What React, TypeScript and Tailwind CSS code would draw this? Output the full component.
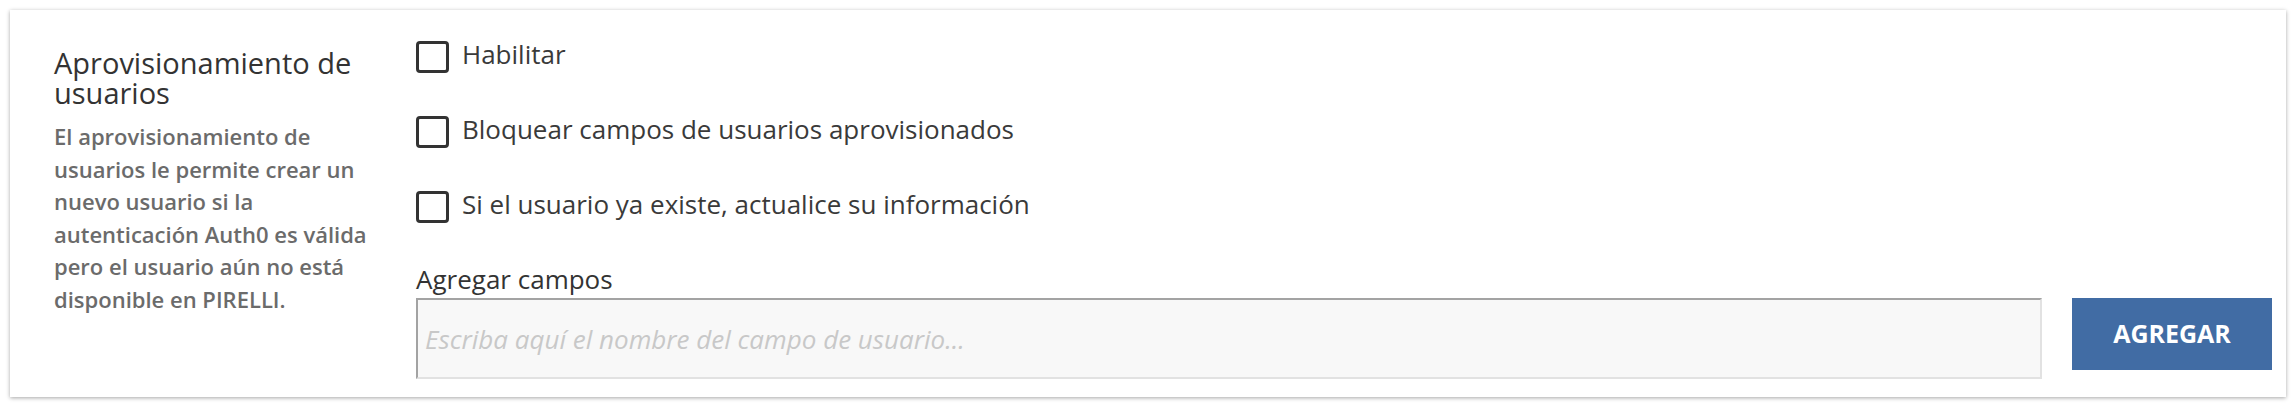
import React from "react";

function Checkbox() {
  return (
    <span className="block w-[33px] h-[32px] shrink-0 rounded-[4px] border-[3px] border-[#333333] bg-white" />
  );
}

function CheckRow({ label }: { label: string }) {
  return (
    <label className="flex items-start gap-[13px]">
      <Checkbox />
      <span className="text-[26px] leading-[26px] text-[#3a3a3a]">{label}</span>
    </label>
  );
}

export default function App() {
  return (
    <div className="w-[2296px] h-[408px] bg-white p-[10px] font-['Open_Sans',sans-serif]">
      <div className="h-[387px] bg-white shadow-[0_1px_4px_rgba(0,0,0,0.35)] flex pl-[44px] pr-[14px]">
        <div className="w-[336px] shrink-0 pt-[38px]">
          <h2 className="text-[29px] leading-[30px] font-normal text-[#333333]">
            Aprovisionamiento de usuarios
          </h2>
          <p className="mt-[12px] text-[22px] leading-[32.5px] font-semibold text-[#6b6b6b]">
            El aprovisionamiento de usuarios le permite crear un nuevo usuario si la autenticación Auth0 es válida pero el usuario aún no está disponible en PIRELLI.
          </p>
        </div>
        <div className="flex-1 ml-[26px] pt-[31px] flex flex-col">
          <div className="flex flex-col gap-[43px]">
            <CheckRow label="Habilitar" />
            <CheckRow label="Bloquear campos de usuarios aprovisionados" />
            <CheckRow label="Si el usuario ya existe, actualice su información" />
          </div>
          <div className="mt-[43px] text-[26px] leading-[26px] text-[#333333]">Agregar campos</div>
          <div className="mt-[6px] flex items-start gap-[30px]">
            <input
              type="text"
              placeholder="Escriba aquí el nombre del campo de usuario..."
              className="flex-1 h-[81px] bg-[#f8f8f8] border-2 border-t-[#a3a3a3] border-l-[#a3a3a3] border-r-[#e2e2e2] border-b-[#e2e2e2] px-[7px] text-[26px] text-[#333] outline-none placeholder:italic placeholder:text-[#c8c8c8] font-['Open_Sans',sans-serif]"
            />
            <button className="w-[200px] h-[72px] shrink-0 bg-[#416ca4] text-white text-[25px] font-bold font-['Open_Sans',sans-serif]">
              AGREGAR
            </button>
          </div>
        </div>
      </div>
    </div>
  );
}
